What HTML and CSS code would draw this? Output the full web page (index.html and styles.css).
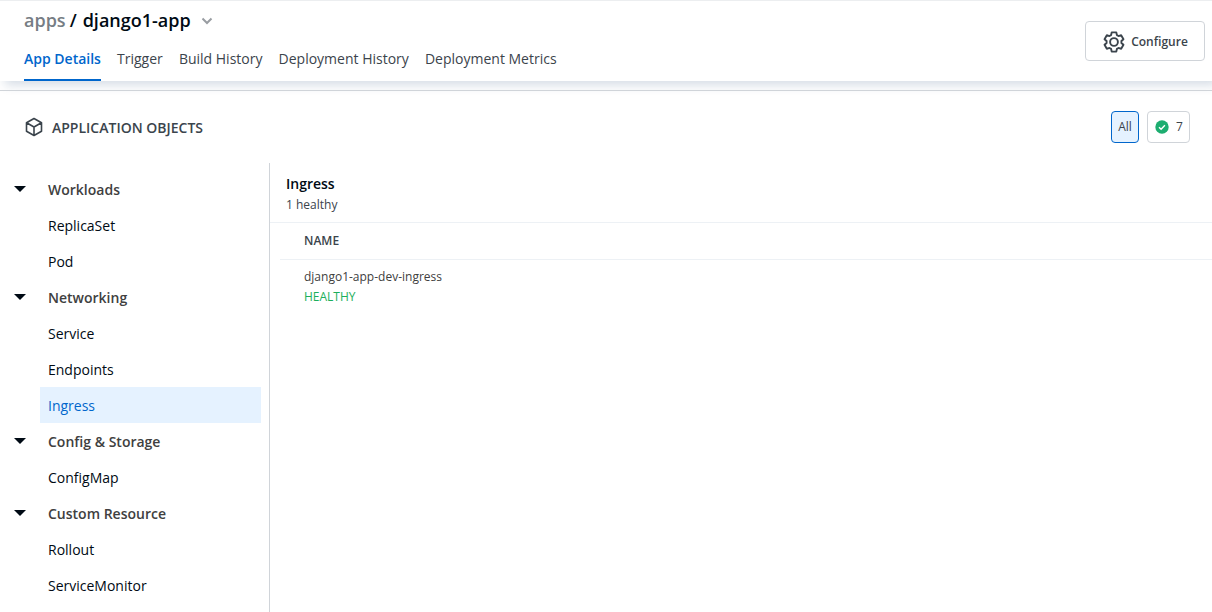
FILE: index.html
```html
<!DOCTYPE html>
<html lang="en">
<head>
<meta charset="utf-8">
<title>django1-app</title>
<link rel="stylesheet" href="styles.css">
</head>
<body>
<header class="header">
  <div class="header-main">
    <h1 class="breadcrumb"><span class="crumb-parent">apps</span><span>/</span><span class="crumb-app">django1-app</span>
      <svg class="chevron" width="12" height="8" viewBox="0 0 12 8"><path d="M1.500 1.500L6 6l4.500-4.500" fill="none" stroke="#999da2" stroke-width="2"/></svg>
    </h1>
    <nav class="tabs">
      <a class="tab tab-active">App Details</a><a class="tab">Trigger</a><a class="tab">Build History</a><a class="tab">Deployment History</a><a class="tab">Deployment Metrics</a>
    </nav>
  </div>
  <button class="configure">
    <svg class="gear" width="22" height="22" viewBox="-11 -11 22 22" fill="none" stroke="#3b444c" stroke-width="1.900" stroke-linejoin="round"><circle r="3.900"/><path d="M-2.300-9.600H2.300L2.900-6.900L4.530-5.960L7.160-6.790L9.460-2.810L7.430-.94V.94L9.460 2.810L7.160 6.790L4.530 5.960L2.900 6.900L2.300 9.600H-2.300L-2.900 6.900L-4.530 5.960L-7.160 6.790L-9.460 2.810L-7.430 .94V-.94L-9.460-2.810L-7.160-6.790L-4.530-5.960L-2.900-6.900z"/></svg>
    <span class="configure-label">Configure</span>
  </button>
</header>
<section class="objects-bar">
  <svg class="cube" width="20" height="20" viewBox="0 0 20 20" fill="none" stroke="#3b444c" stroke-width="1.600" stroke-linejoin="round"><path d="M10 1.500l7.500 4.200v8.600L10 18.500l-7.500-4.200V5.700zM2.600 5.800L10 10l7.400-4.200M10 10v8.500"/></svg>
  <h2 class="objects-title">APPLICATION OBJECTS</h2>
  <div class="filters">
    <span class="filter filter-all">All</span>
    <span class="filter filter-count"><svg width="14" height="14" viewBox="0 0 14 14"><circle cx="7" cy="7" r="6.700" fill="#1dad70"/><path d="M4 7.200l2.100 2 3.800-3.900" fill="none" stroke="#fff" stroke-width="1.400"/></svg>7</span>
  </div>
</section>
<main class="content">
  <aside class="tree">
    <div class="group"><i class="caret"></i><span class="label">Workloads</span></div>
    <a class="node">ReplicaSet</a><a class="node">Pod</a>
    <div class="group"><i class="caret"></i><span class="label">Networking</span></div>
    <a class="node">Service</a><a class="node">Endpoints</a><a class="node node-active">Ingress</a>
    <div class="group"><i class="caret"></i><span class="label">Config &amp; Storage</span></div>
    <a class="node">ConfigMap</a>
    <div class="group"><i class="caret"></i><span class="label">Custom Resource</span></div>
    <a class="node">Rollout</a><a class="node">ServiceMonitor</a>
  </aside>
  <section class="detail">
    <div class="detail-head"><h3 class="kind">Ingress</h3><p class="summary">1 healthy</p></div>
    <div class="column-head">NAME</div>
    <div class="row"><p class="row-name">django1-app-dev-ingress</p><p class="row-status">HEALTHY</p></div>
  </section>
</main>
</body>
</html>
```
FILE: styles.css
```css
* { box-sizing: border-box; margin: 0; }
body { height: 612px; overflow: hidden; display: flex; flex-direction: column; font-family: "Open Sans", sans-serif; font-size: 14px; line-height: 20px; color: #000a14; background: #fff; }
.header { height: 81px; flex: none; display: flex; justify-content: space-between; padding: 0 7px 0 24px; border-top: 1px solid #eceef0; box-shadow: 5px 4px 10px rgba(21, 60, 110, .18); }
.header-main { display: flex; flex-direction: column; justify-content: space-between; }
.breadcrumb { display: flex; align-items: center; padding-top: 7px; font-size: 18px; line-height: 24px; font-weight: 600; }
.crumb-parent { margin-right: 4px; color: #767d84; }
.crumb-app { margin-left: 6px; }
.chevron { margin: 1px 0 0 10px; }
.tabs { display: flex; gap: 16.100px; }
.tab { height: 32px; color: #3b444c; }
.tab-active { color: #0066cc; font-weight: 600; border-bottom: 2px solid #0066cc; }
.configure { display: flex; align-items: center; justify-content: center; gap: 6px; width: 120px; height: 40px; margin-top: 20px; padding: 0 0 0 1px; border: 1px solid #d0d4d9; border-radius: 4px; background: #fff; color: #3b444c; font: 600 12px/20px "Open Sans", sans-serif; }
.gear { margin-top: 1px; }
.configure-label { padding-top: 1px; }
.objects-bar { height: 73px; flex: none; display: flex; align-items: center; margin-top: 9px; padding: 0 22px 1px 24px; border-top: 1px solid #d0d4d9; }
.objects-title { margin-left: 8px; padding-top: 3px; font-size: 14px; font-weight: 600; color: #3b444c; }
.filters { display: flex; gap: 8px; margin-left: auto; }
.filter { display: flex; align-items: center; justify-content: center; height: 32px; border: 1px solid #d0d4d9; border-radius: 4px; font-size: 12px; color: #3b444c; }
.filter-all { width: 28px; border-color: #0066cc; background: #e5f2ff; }
.filter-count { width: 43px; gap: 7px; padding-left: 1px; }
.content { flex: 1; min-height: 0; display: flex; }
.tree { width: 270px; flex: none; padding: 8px 8px 0 14px; border-right: 1px solid #d0d4d9; }
.group { height: 36px; display: flex; align-items: center; gap: 22px; font-weight: 600; color: #404040; }
.label { padding-top: 2px; }
.caret { border: 6px solid transparent; border-top-color: #000a14; border-bottom: 0; }
.node { height: 36px; display: flex; align-items: center; margin-left: 26px; padding: 2px 0 0 8px; }
.node-active { color: #0066cc; background: #e5f2ff; }
.detail { flex: 1; }
.detail-head { height: 60px; padding: 11px 16px 0; border-bottom: 1px solid #edf1f5; }
.kind { font-size: 14px; font-weight: 600; }
.summary { padding-top: 1px; font-size: 12px; color: #3b444c; }
.column-head { height: 37px; margin-left: 10px; padding: 8px 24px; border-bottom: 1px solid #edf1f5; font-size: 12px; font-weight: 600; color: #3b444c; }
.row { padding: 7px 34px; font-size: 12px; color: #404040; }
.row-status { color: #1daf5b; }
```
